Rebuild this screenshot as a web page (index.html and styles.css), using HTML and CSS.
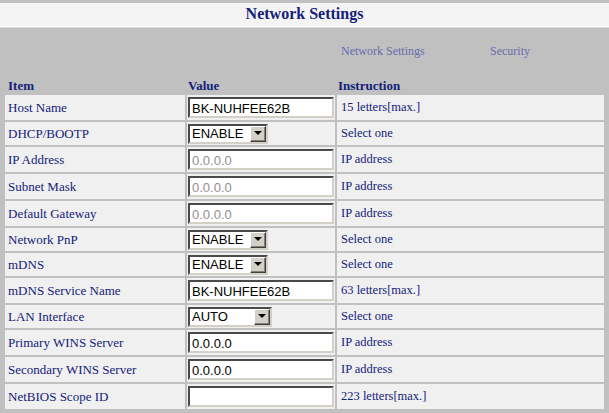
FILE: index.html
```html
<!DOCTYPE html>
<html>
<head>
<meta charset="utf-8">
<title>Network Settings</title>
<link rel="stylesheet" href="styles.css">
</head>
<body>
<div class="titlebar"><h1 class="title">Network Settings</h1></div>
<div class="tabs">
  <a class="tab tab-net" href="#">Network Settings</a>
  <a class="tab" href="#">Security</a>
</div>
<table class="grid">
  <colgroup><col class="c1"><col class="c2"><col class="c3"></colgroup>
  <tr class="head"><th class="h-item">Item</th><th class="h-val">Value</th><th class="h-ins">Instruction</th></tr>
  <tr class="r-in"><td class="lbl">Host Name</td><td class="val"><input class="txt" type="text" value="BK-NUHFEE62B"></td><td class="ins">15 letters[max.]</td></tr>
  <tr class="r-sel"><td class="lbl">DHCP/BOOTP</td><td class="val"><span class="sel sel-en"><select><option>ENABLE</option><option>DISABLE</option></select><span class="arrow"><span class="tri"></span></span></span></td><td class="ins">Select one</td></tr>
  <tr class="r-in"><td class="lbl">IP Address</td><td class="val"><input class="txt" type="text" value="0.0.0.0" disabled></td><td class="ins">IP address</td></tr>
  <tr class="r-in"><td class="lbl">Subnet Mask</td><td class="val"><input class="txt" type="text" value="0.0.0.0" disabled></td><td class="ins">IP address</td></tr>
  <tr class="r-in"><td class="lbl">Default Gateway</td><td class="val"><input class="txt" type="text" value="0.0.0.0" disabled></td><td class="ins">IP address</td></tr>
  <tr class="r-sel"><td class="lbl">Network PnP</td><td class="val"><span class="sel sel-en"><select><option>ENABLE</option><option>DISABLE</option></select><span class="arrow"><span class="tri"></span></span></span></td><td class="ins">Select one</td></tr>
  <tr class="r-sel"><td class="lbl">mDNS</td><td class="val"><span class="sel sel-en"><select><option>ENABLE</option><option>DISABLE</option></select><span class="arrow"><span class="tri"></span></span></span></td><td class="ins">Select one</td></tr>
  <tr class="r-in"><td class="lbl">mDNS Service Name</td><td class="val"><input class="txt" type="text" value="BK-NUHFEE62B"></td><td class="ins">63 letters[max.]</td></tr>
  <tr class="r-sel"><td class="lbl">LAN Interface</td><td class="val"><span class="sel sel-auto"><select><option>AUTO</option></select><span class="arrow"><span class="tri"></span></span></span></td><td class="ins">Select one</td></tr>
  <tr class="r-in"><td class="lbl">Primary WINS Server</td><td class="val"><input class="txt" type="text" value="0.0.0.0"></td><td class="ins">IP address</td></tr>
  <tr class="r-in"><td class="lbl">Secondary WINS Server</td><td class="val"><input class="txt" type="text" value="0.0.0.0"></td><td class="ins">IP address</td></tr>
  <tr class="r-in"><td class="lbl">NetBIOS Scope ID</td><td class="val"><input class="txt" type="text" value=""></td><td class="ins">223 letters[max.]</td></tr>
</table>
</body>
</html>
```
FILE: styles.css
```css
html, body {
  margin: 0;
  padding: 0;
}
body {
  background: #c0c0c0;
  font-family: "Liberation Serif", "Times New Roman", serif;
  color: #14207a;
  width: 609px;
  height: 413px;
  overflow: hidden;
}
.titlebar {
  margin-top: 3px;
  height: 23px;
  background: #f4f4f4;
  border-bottom: 1px solid #ffffff;
  box-shadow: 0 1px 0 #d8d8d8;
  display: flex;
  align-items: center;
  justify-content: center;
}
.title {
  margin: 0;
  font-size: 16px;
  font-weight: bold;
  color: #14207a;
  line-height: 18px;
  padding-bottom: 1px;
}
.tabs {
  display: flex;
  padding: 15px 0 18px 341px;
  height: 16px;
  margin-top: 1px;
}
.tab {
  font-size: 12px;
  line-height: 16px;
  color: #6a6aae;
  text-decoration: none;
}
.tab-net {
  width: 149px;
}
.grid {
  margin-left: 3px;
  width: 603px;
  border-spacing: 2px;
  table-layout: fixed;
}
.c1 { width: 180px; }
.c2 { width: 148px; }
.c3 { width: 267px; }
.head th {
  font-size: 13px;
  font-weight: bold;
  text-align: left;
  height: 14px;
  padding: 0;
  line-height: 14px;
  color: #14207a;
}
.h-item { padding-left: 3px !important; }
.h-val { padding-left: 1px !important; }
.h-ins { padding-left: 1px !important; }
td {
  background: #f0f0f0;
  padding: 0;
  font-size: 13px;
  vertical-align: middle;
}
.r-in td { height: 25px; }
.r-sel td { height: 23px; }
.lbl { padding-left: 3px; }
.val { padding-left: 1px; }
.ins { padding-left: 4px; font-size: 12.5px; }
.txt {
  box-sizing: border-box;
  width: 146px;
  height: 21px;
  margin: 0;
  padding: 1px 2px 0;
  font-family: "Liberation Sans", Arial, sans-serif;
  font-size: 13px;
  color: #000;
  background: #fff;
  border: 2px solid;
  border-color: #4a4a4a #d4d0c8 #d4d0c8 #4a4a4a;
  display: block;
  outline: none;
}
.txt:disabled {
  color: #8f8f8f;
  background: #fff;
}
.sel {
  position: relative;
  display: block;
  height: 20px;
}
.sel-en { width: 80px; }
.sel-auto { width: 84px; }
.sel select {
  appearance: none;
  -webkit-appearance: none;
  box-sizing: border-box;
  width: 100%;
  height: 20px;
  margin: 0;
  padding: 0 0 0 2px;
  font-family: "Liberation Sans", Arial, sans-serif;
  font-size: 13px;
  color: #000;
  background: #fff;
  border: 2px solid;
  border-color: #4a4a4a #d4d0c8 #d4d0c8 #4a4a4a;
  border-radius: 0;
  outline: none;
}
.arrow {
  position: absolute;
  right: 2px;
  top: 2px;
  width: 16px;
  height: 16px;
  box-sizing: border-box;
  background: #d4d0c8;
  border: 1px solid;
  border-color: #ffffff #404040 #404040 #ffffff;
  box-shadow: inset -1px -1px 0 #808080;
  pointer-events: none;
  display: flex;
  align-items: center;
  justify-content: center;
}
.tri {
  width: 0;
  height: 0;
  border-left: 4px solid transparent;
  border-right: 4px solid transparent;
  border-top: 4px solid #000;
  margin-right: 1px;
  margin-bottom: 1px;
}
```
